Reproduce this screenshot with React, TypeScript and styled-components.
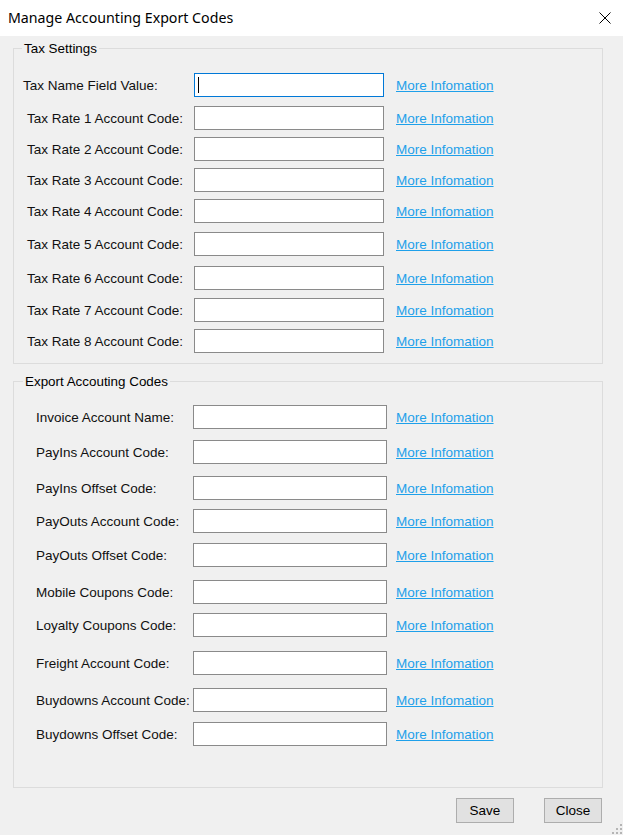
import React from "react";
import styled, { createGlobalStyle } from "styled-components";

const GlobalStyle = createGlobalStyle`
  html, body {
    margin: 0;
    padding: 0;
    background: #f0f0f0;
  }
  body {
    font-family: "Liberation Sans", Arial, sans-serif;
    color: #000;
  }
  * { box-sizing: border-box; }
`;

const Window = styled.div`
  position: relative;
  width: 623px;
  height: 835px;
  background: #f0f0f0;
  overflow: hidden;
`;

const TitleBar = styled.div`
  height: 36px;
  background: #fff;
  display: flex;
  align-items: center;
  justify-content: space-between;
  padding: 0 12px 0 8px;
`;

const Title = styled.div`
  font-family: "Noto Sans", "Open Sans", sans-serif;
  font-size: 14.2px;
  color: #000;
  padding-bottom: 2px;
`;

const CloseIcon = styled.svg`
  display: block;
  width: 12px;
  height: 12px;
`;

const Body = styled.div`
  padding: 5px 20px 0 13px;
  display: flex;
  flex-direction: column;
`;

const Group = styled.fieldset<{ $padBottom: number; $gapTop: number }>`
  margin: ${(p) => p.$gapTop}px 0 0 0;
  padding: 0 0 ${(p) => p.$padBottom}px 0;
  min-width: 0;
  border: 1px solid #dcdcdc;
  display: flex;
  flex-direction: column;
`;

const Legend = styled.legend<{ $offset: number }>`
  margin-left: ${(p) => p.$offset}px;
  padding: 0 2px;
  font-size: 13.4px;
  line-height: 15px;
  color: #000;
`;

const Row = styled.div<{ $gap: number; $labelCol: number; $inputW: number }>`
  margin-top: ${(p) => p.$gap}px;
  height: 24px;
  display: grid;
  grid-template-columns: ${(p) => p.$labelCol}px ${(p) => p.$inputW}px auto;
  align-items: center;
`;

const Label = styled.label<{ $indent: number }>`
  padding-left: ${(p) => p.$indent}px;
  font-size: 13.5px;
  line-height: 16px;
  color: #111;
  white-space: nowrap;
  padding-top: 1px;
`;

const Field = styled.div<{ $focused?: boolean }>`
  position: relative;
  height: 24px;
  &::after {
    content: "";
    display: ${(p) => (p.$focused ? "block" : "none")};
    position: absolute;
    left: 4px;
    top: 4px;
    width: 1px;
    height: 16px;
    background: #000;
  }
`;

const TextBox = styled.input<{ $focused?: boolean }>`
  display: block;
  width: 100%;
  height: 24px;
  margin: 0;
  padding: 0 4px;
  background: #fff;
  border: 1px solid ${(p) => (p.$focused ? "#0078d7" : "#8a8a8a")};
  border-radius: 0;
  outline: none;
  font-family: "Liberation Sans", Arial, sans-serif;
  font-size: 13.3px;
`;

const InfoLink = styled.a<{ $gap: number }>`
  margin-left: ${(p) => p.$gap}px;
  justify-self: start;
  font-size: 13.5px;
  line-height: 16px;
  color: #1ea0ea;
  text-decoration: underline;
  text-underline-offset: 1px;
  white-space: nowrap;
  cursor: pointer;
  padding-top: 1px;
`;

const ButtonBar = styled.div`
  margin: 10px 1px 0 0;
  display: flex;
  justify-content: flex-end;
  gap: 30px;
`;

const Button = styled.button`
  width: 58px;
  height: 25px;
  margin: 0;
  padding: 0;
  background: #e1e1e1;
  border: 1px solid #adadad;
  border-radius: 0;
  font-family: "Liberation Sans", Arial, sans-serif;
  font-size: 13.5px;
  color: #000;
`;

const Grip = styled.svg`
  position: absolute;
  right: 1px;
  bottom: 1px;
  width: 11px;
  height: 11px;
`;

type RowDef = { label: string; gap: number; indent: number; focused?: boolean };

const taxRows: RowDef[] = [
  { label: "Tax Name Field Value:", gap: 17, indent: 9, focused: true },
  { label: "Tax Rate 1 Account Code:", gap: 9, indent: 13 },
  { label: "Tax Rate 2 Account Code:", gap: 7, indent: 13 },
  { label: "Tax Rate 3 Account Code:", gap: 7, indent: 13 },
  { label: "Tax Rate 4 Account Code:", gap: 7, indent: 13 },
  { label: "Tax Rate 5 Account Code:", gap: 9, indent: 13 },
  { label: "Tax Rate 6 Account Code:", gap: 10, indent: 13 },
  { label: "Tax Rate 7 Account Code:", gap: 8, indent: 13 },
  { label: "Tax Rate 8 Account Code:", gap: 7, indent: 13 },
];

const exportRows: RowDef[] = [
  { label: "Invoice Account Name:", gap: 16, indent: 22 },
  { label: "PayIns Account Code:", gap: 11, indent: 22 },
  { label: "PayIns Offset Code:", gap: 12, indent: 22 },
  { label: "PayOuts Account Code:", gap: 9, indent: 22 },
  { label: "PayOuts Offset Code:", gap: 10, indent: 22 },
  { label: "Mobile Coupons Code:", gap: 13, indent: 22 },
  { label: "Loyalty Coupons Code:", gap: 9, indent: 22 },
  { label: "Freight Account Code:", gap: 14, indent: 22 },
  { label: "Buydowns Account Code:", gap: 13, indent: 22 },
  { label: "Buydowns Offset Code:", gap: 10, indent: 22 },
];

type GroupProps = {
  title: string;
  rows: RowDef[];
  gapTop: number;
  padBottom: number;
  legendOffset: number;
  labelCol: number;
  inputW: number;
  linkGap: number;
};

const FormGroup: React.FC<GroupProps> = ({ title, rows, gapTop, padBottom, legendOffset, labelCol, inputW, linkGap }) => (
  <Group $gapTop={gapTop} $padBottom={padBottom}>
    <Legend $offset={legendOffset}>{title}</Legend>
    {rows.map((r) => (
      <Row key={r.label} $gap={r.gap} $labelCol={labelCol} $inputW={inputW}>
        <Label $indent={r.indent}>{r.label}</Label>
        <Field $focused={r.focused}>
          <TextBox type="text" $focused={r.focused} defaultValue="" aria-label={r.label} />
        </Field>
        <InfoLink $gap={linkGap}>More Infomation</InfoLink>
      </Row>
    ))}
  </Group>
);

export default function App() {
  return (
    <>
      <GlobalStyle />
      <Window>
        <TitleBar>
          <Title>Manage Accounting Export Codes</Title>
          <CloseIcon viewBox="0 0 12 12">
            <path d="M0.5 0.5 L11.5 11.5 M11.5 0.5 L0.5 11.5" stroke="#000" strokeWidth="1" fill="none" />
          </CloseIcon>
        </TitleBar>
        <Body>
          <FormGroup
            title="Tax Settings"
            rows={taxRows}
            gapTop={0}
            padBottom={10}
            legendOffset={8}
            labelCol={180}
            inputW={190}
            linkGap={12}
          />
          <FormGroup
            title="Export Accouting Codes"
            rows={exportRows}
            gapTop={10}
            padBottom={41}
            legendOffset={9}
            labelCol={179}
            inputW={194}
            linkGap={9}
          />
          <ButtonBar>
            <Button type="button">Save</Button>
            <Button type="button">Close</Button>
          </ButtonBar>
        </Body>
        <Grip viewBox="0 0 11 11">
          <g fill="#b5b5b5">
            <rect x="9" y="1" width="2" height="2" />
            <rect x="9" y="5" width="2" height="2" />
            <rect x="5" y="5" width="2" height="2" />
            <rect x="9" y="9" width="2" height="2" />
            <rect x="5" y="9" width="2" height="2" />
            <rect x="1" y="9" width="2" height="2" />
          </g>
        </Grip>
      </Window>
    </>
  );
}
